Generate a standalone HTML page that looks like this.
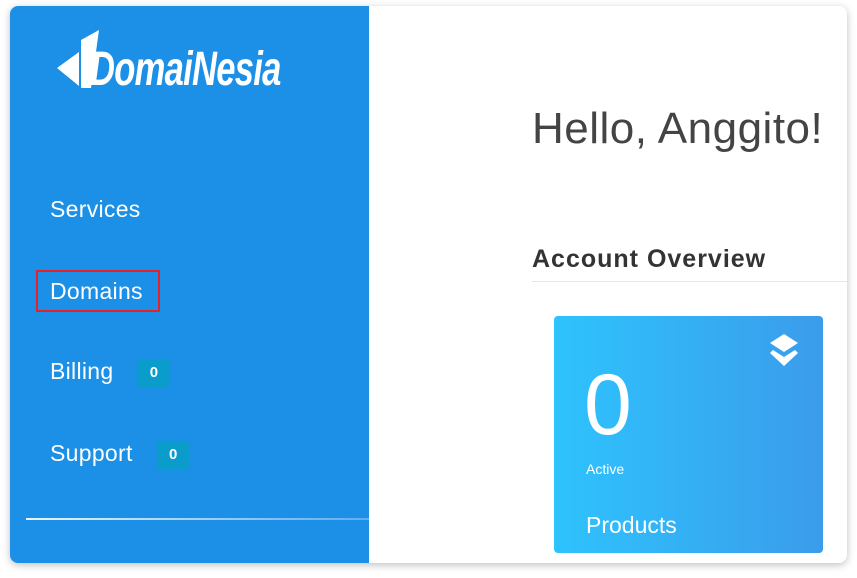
<!DOCTYPE html>
<html><head><style>
body{margin:0;width:857px;height:578px;background:#fff;overflow:hidden;font-family:"Liberation Sans",sans-serif;position:relative}
.panel{position:absolute;left:10px;top:6px;width:837px;height:557px;border-radius:8px;background:#fff;box-shadow:0 2px 8px rgba(0,0,0,.25);overflow:hidden}
.side{position:absolute;left:0;top:0;width:359px;height:557px;background:#1c8fe6}
.nav{position:absolute;left:40px;color:#fff;font-size:23px;letter-spacing:.3px}
.badge{display:inline-block;background:#0a9cca;color:#fff;font-size:15px;font-weight:bold;width:33px;height:28px;line-height:28px;text-align:center;border-radius:3px;vertical-align:middle;margin-left:24px;letter-spacing:0}
.line{position:absolute;left:16px;top:512px;width:343px;height:2px;background:linear-gradient(90deg,#e8f4fd,#5eaef0)}
.card{position:absolute;left:544px;top:310px;width:269px;height:237px;border-radius:4px;background:linear-gradient(90deg,#2ec3fd,#3b9ceb);color:#fff}
</style></head><body>
<div class="panel">
<div class="side">
<svg style="position:absolute;left:47px;top:22px" width="46" height="62"><polygon points="0,40 22,24 22,58" fill="#fff"/><polygon points="24,12 42,2 34,60 24,60" fill="#fff"/></svg>
<div style="position:absolute;left:80px;top:36px;color:#fff;font-size:48px;font-weight:bold;font-style:italic;letter-spacing:-1px;transform:scaleX(.72);transform-origin:left">DomaiNesia</div>
<div class="nav" style="top:190px">Services</div>
<div style="position:absolute;left:26px;top:264px;width:124px;height:42px;border:2px solid #e8202a;box-sizing:border-box"></div>
<div class="nav" style="top:272px">Domains</div>
<div class="nav" style="top:352px">Billing<span class="badge">0</span></div>
<div class="nav" style="top:434px">Support<span class="badge">0</span></div>
<div class="line"></div>
</div>
<div style="position:absolute;left:522px;top:98px;font-size:44px;color:#444;letter-spacing:.5px">Hello, Anggito!</div>
<div style="position:absolute;left:522px;top:239px;font-size:25px;font-weight:bold;color:#333;letter-spacing:1px">Account Overview</div>
<div style="position:absolute;left:522px;top:275px;width:315px;height:1px;background:#e6e6e6"></div>
<div class="card">
<svg style="position:absolute;left:215px;top:18px" width="30" height="33" viewBox="0 0 30 33"><polygon points="15,0 29,9 15,18 1,9" fill="#fff"/><polygon points="4,16 15,23 26,16 29,19 15,32 1,19" fill="#fff"/></svg>
<div style="position:absolute;left:30px;top:40px;font-size:86px">0</div>
<div style="position:absolute;left:32px;top:145px;font-size:14px">Active</div>
<div style="position:absolute;left:32px;top:196px;font-size:23px">Products</div>
</div>
</div>
</body></html>
